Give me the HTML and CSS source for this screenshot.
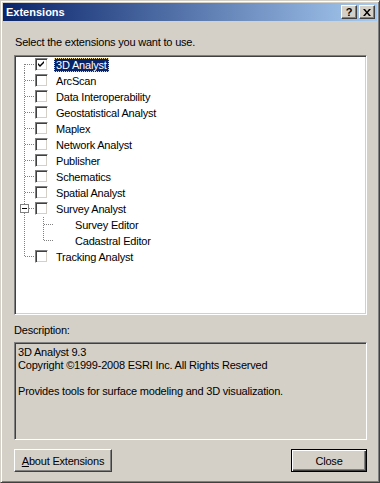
FILE: index.html
```html
<!DOCTYPE html>
<html>
<head>
    <link rel="stylesheet" href="styles.css">
</head>
<body>
    <div class="window">
        <div class="titlebar">
            <span class="title">Extensions</span>
            <div class="caption-btns">
                <div class="cbtn help">?</div>
                <div class="cbtn">
                    <svg width="8" height="7" viewBox="0 0 8 7"><path d="M0 0h2l2 2.5 2-2.5h2l-3 3.5 3 3.5h-2l-2-2.5-2 2.5h-2l3-3.5z" fill="#000"/></svg>
                </div>
            </div>
        </div>

        <div class="client">
            <div class="prompt">Select the extensions you want to use.</div>

            <div class="tree">
                <div class="row">
                    <div class="stem first"></div>
                    <div class="check"><svg width="9" height="9" viewBox="0 0 9 9"><path d="M1 3l2 2 4-4v2l-4 4-2-2z" fill="#000"/></svg></div>
                    <span class="label selected">3D Analyst</span>
                </div>
                <div class="row"><div class="stem"></div><div class="check"></div><span class="label">ArcScan</span></div>
                <div class="row"><div class="stem"></div><div class="check"></div><span class="label">Data Interoperability</span></div>
                <div class="row"><div class="stem"></div><div class="check"></div><span class="label">Geostatistical Analyst</span></div>
                <div class="row"><div class="stem"></div><div class="check"></div><span class="label">Maplex</span></div>
                <div class="row"><div class="stem"></div><div class="check"></div><span class="label">Network Analyst</span></div>
                <div class="row"><div class="stem"></div><div class="check"></div><span class="label">Publisher</span></div>
                <div class="row"><div class="stem"></div><div class="check"></div><span class="label">Schematics</span></div>
                <div class="row"><div class="stem"></div><div class="check"></div><span class="label">Spatial Analyst</span></div>
                <div class="row">
                    <div class="stem expander"><div class="minus"></div></div>
                    <div class="check"></div><span class="label">Survey Analyst</span>
                </div>
                <div class="row child">
                    <div class="stem trunk"></div><div class="gap"></div>
                    <div class="stem sub"></div><span class="label">Survey Editor</span>
                </div>
                <div class="row child">
                    <div class="stem trunk"></div><div class="gap"></div>
                    <div class="stem sub last"></div><span class="label">Cadastral Editor</span>
                </div>
                <div class="row"><div class="stem last"></div><div class="check"></div><span class="label">Tracking Analyst</span></div>
            </div>

            <div class="desc-label">Description:</div>
            <div class="desc">
                <div>3D Analyst 9.3</div>
                <div>Copyright &copy;1999-2008 ESRI Inc. All Rights Reserved</div>
                <div>&nbsp;</div>
                <div>Provides tools for surface modeling and 3D visualization.</div>
            </div>

            <div class="buttons">
                <div class="btn about"><u>A</u>bout Extensions</div>
                <div class="btn close">Close</div>
            </div>
        </div>
    </div>
</body>
</html>
```

FILE: styles.css
```css
body {
  margin: 0;
  background: #d4d0c8;
  font-family: "Liberation Sans", Arial, sans-serif;
  font-size: 11px;
  letter-spacing: -0.2px;
  color: #000;
}

.window {
  width: 380px;
  height: 483px;
  box-sizing: border-box;
  border: 1px solid;
  border-color: #d4d0c8 #404040 #404040 #d4d0c8;
  box-shadow: inset 1px 1px #fff, inset -1px -1px #808080;
  padding: 2px;
  background: #d4d0c8;
}

/* caption */
.titlebar {
  height: 18px;
  display: flex;
  align-items: center;
  justify-content: space-between;
  padding: 0 2px 0 3px;
  background: linear-gradient(to right, #0a246a, #a6caf0);
}
.title {
  color: #fff;
  font-weight: bold;
  font-size: 11px;
  letter-spacing: 0;
}
.caption-btns {
  display: flex;
  gap: 2px;
}
.cbtn {
  width: 16px;
  height: 14px;
  box-sizing: border-box;
  border: 1px solid;
  border-color: #fff #404040 #404040 #fff;
  box-shadow: inset -1px -1px #808080;
  background: #d4d0c8;
  display: flex;
  align-items: center;
  justify-content: center;
}
.cbtn.help {
  font-weight: bold;
  font-size: 11px;
  line-height: 12px;
}

.client {
  padding: 14px 10px 0 11px;
  margin-top: 1px;
}
.prompt {
  line-height: 13px;
  padding-left: 1px;
}

/* tree */
.tree {
  margin-top: 6px;
  height: 260px;
  box-sizing: border-box;
  background: #fff;
  border: 1px solid;
  border-color: #808080 #fff #fff #808080;
  box-shadow: inset 1px 1px #404040, inset -1px -1px #d4d0c8;
  padding: 1px 0 0 9px;
}
.row {
  height: 16px;
  display: flex;
  align-items: center;
}
.stem {
  width: 11px;
  height: 16px;
  flex: none;
  position: relative;
  background-image:
    repeating-linear-gradient(to bottom, #808080 0 1px, transparent 1px 2px),
    repeating-linear-gradient(to right, #808080 0 1px, transparent 1px 2px);
  background-size: 1px 16px, 10px 1px;
  background-position: 0 0, 1px 7px;
  background-repeat: no-repeat;
}
.stem.first {
  background-size: 1px 9px, 10px 1px;
  background-position: 0 7px, 1px 7px;
}
.stem.last {
  background-size: 1px 8px, 10px 1px;
  background-position: 0 0, 1px 7px;
}
.stem.trunk {
  background-size: 1px 16px, 0 0;
}
.stem.sub {
  background-size: 1px 16px, 11px 1px;
}
.stem.sub.last {
  background-size: 1px 8px, 11px 1px;
}
.gap {
  width: 8px;
  flex: none;
}
.expander .minus {
  position: absolute;
  left: -4px;
  top: 3px;
  width: 9px;
  height: 9px;
  box-sizing: border-box;
  border: 1px solid #808080;
  background: linear-gradient(#000, #000) center / 5px 1px no-repeat, #fff;
}

.check {
  width: 13px;
  height: 13px;
  flex: none;
  box-sizing: border-box;
  border: 1px solid;
  border-color: #808080 #fff #fff #808080;
  box-shadow: inset 1px 1px #404040, inset -1px -1px #d4d0c8;
  background: #fff;
  padding: 1px;
  margin-top: -1px;
}
.check svg {
  display: block;
}
.label {
  margin-left: 6px;
  padding: 0 2px;
  line-height: 14px;
  white-space: nowrap;
}
.label.selected {
  background: #0a246a;
  color: #fff;
  outline: 1px dotted #f2d98c;
  outline-offset: -1px;
}
.child .label {
  margin-left: 19px;
}

/* description */
.desc-label {
  margin-top: 9px;
  line-height: 13px;
}
.desc {
  margin-top: 5px;
  height: 98px;
  box-sizing: border-box;
  border: 1px solid;
  border-color: #808080 #fff #fff #808080;
  box-shadow: inset 1px 1px #404040, inset -1px -1px #d4d0c8;
  padding: 3px 2px 0 3px;
  line-height: 13px;
}

/* buttons */
.buttons {
  margin-top: 9px;
  display: flex;
  justify-content: space-between;
}
.btn {
  height: 23px;
  box-sizing: border-box;
  border: 1px solid;
  border-color: #fff #404040 #404040 #fff;
  box-shadow: inset -1px -1px #808080;
  display: flex;
  align-items: center;
  justify-content: center;
}
.btn.about {
  width: 98px;
}
.btn.close {
  width: 76px;
  border: 1px solid #000;
  box-shadow: inset 1px 1px #fff, inset -1px -1px #404040, inset -2px -2px #808080;
}
```
